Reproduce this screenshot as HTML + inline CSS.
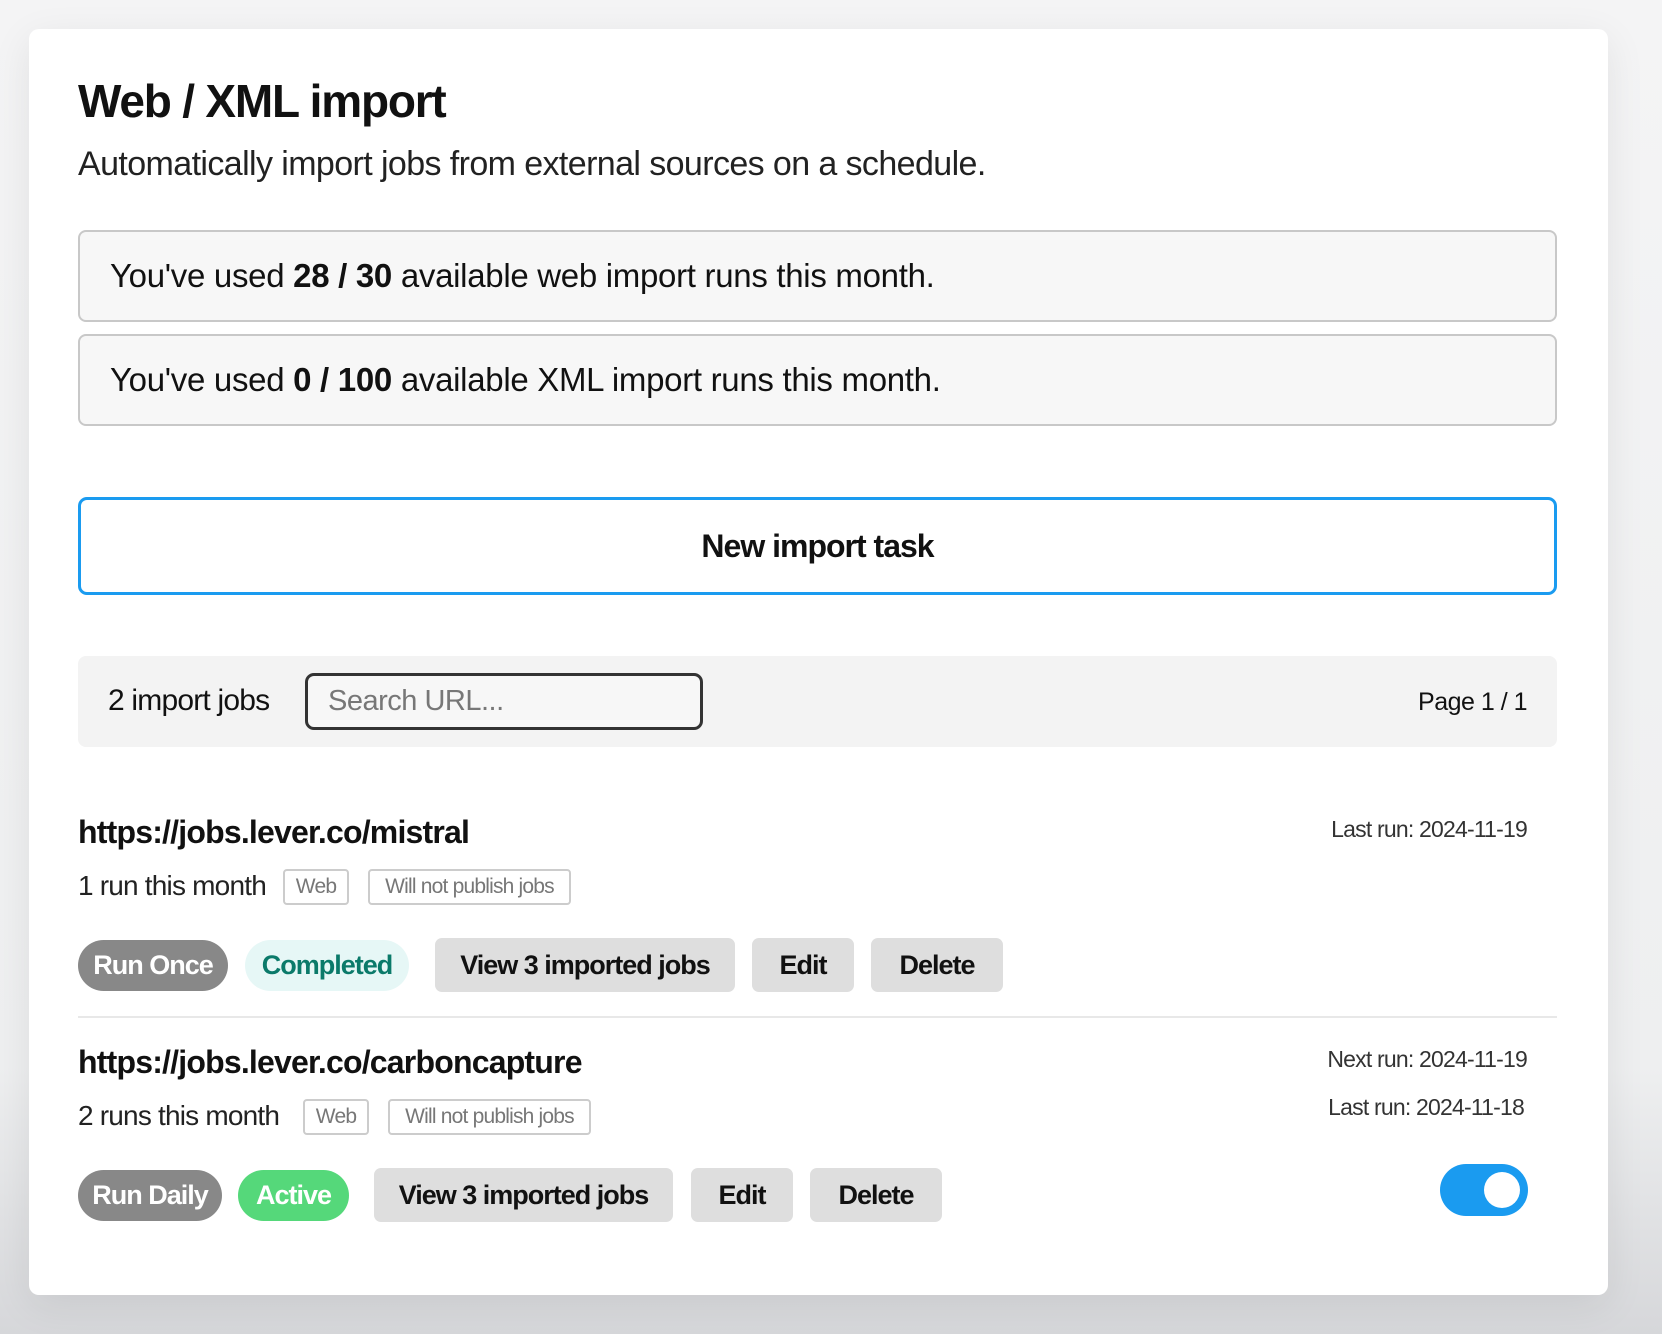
<!DOCTYPE html>
<html><head><meta charset="utf-8"><style>
*{box-sizing:border-box;margin:0;padding:0}
body{width:1662px;height:1334px;background:linear-gradient(#f4f4f5 0%,#eeeff0 80%,#d6d7da 100%);font-family:"Liberation Sans",sans-serif;color:#111;position:relative;overflow:hidden;letter-spacing:-0.5px}
.card{position:absolute;left:29px;top:29px;width:1579px;height:1266px;background:#fff;border-radius:10px;box-shadow:0 10px 40px rgba(0,0,0,.08)}
.a{position:absolute;white-space:nowrap}
h1{position:absolute;left:78px;top:74px;font-size:46px;font-weight:bold;letter-spacing:-1.2px}
.sub{left:78px;top:145px;font-size:34px;color:#222;letter-spacing:-0.6px}
.box{position:absolute;left:78px;width:1479px;border:2px solid #c8c8c8;border-radius:8px;background:#f7f7f7;font-size:33px;padding-left:30px;display:flex;align-items:center;letter-spacing:-0.3px}
.btn{position:absolute;left:78px;top:497px;width:1479px;height:98px;border:3px solid #1a9bf0;border-radius:9px;display:flex;align-items:center;justify-content:center;font-size:32px;font-weight:bold;letter-spacing:-1px}
.bar{position:absolute;left:78px;top:656px;width:1479px;height:91px;background:#f3f3f3;border-radius:8px}
.search{position:absolute;left:305px;top:673px;width:398px;height:57px;border:3px solid #333;border-radius:9px;background:#f7f7f7;font-size:29px;color:#777;padding-left:20px;display:flex;align-items:center}
.url{font-size:32px;font-weight:bold;left:78px;letter-spacing:-0.8px}
.meta{font-size:23px;color:#333;right:135px;letter-spacing:-0.8px}
.runs{font-size:28px;left:78px;color:#222;letter-spacing:-0.8px}
.tag{position:absolute;height:36px;border:2px solid #ccc;border-radius:4px;font-size:21px;color:#777;display:flex;align-items:center;justify-content:center;letter-spacing:-0.8px}
.b{position:absolute;height:54px;font-size:27px;font-weight:bold;display:flex;align-items:center;justify-content:center;border-radius:7px;background:#dedede;color:#111;letter-spacing:-1px}
.pill{border-radius:27px;height:51px}
</style></head><body>
<div class="card"></div>
<h1>Web / XML import</h1>
<div class="a sub">Automatically import jobs from external sources on a schedule.</div>
<div class="box" style="top:230px;height:92px">You've used&nbsp;<b>28 / 30</b>&nbsp;available web import runs this month.</div>
<div class="box" style="top:334px;height:92px">You've used&nbsp;<b>0 / 100</b>&nbsp;available XML import runs this month.</div>
<div class="btn">New import task</div>
<div class="bar"></div>
<div class="a" style="left:108px;top:684px;font-size:30px;letter-spacing:-0.8px">2 import jobs</div>
<div class="search">Search URL...</div>
<div class="a" style="right:135px;top:688px;font-size:25px">Page 1 / 1</div>

<div class="a url" style="top:814px">https://jobs.lever.co/mistral</div>
<div class="a meta" style="top:816px">Last run: 2024-11-19</div>
<div class="a runs" style="top:870px">1 run this month</div>
<div class="tag" style="left:283px;top:869px;width:66px">Web</div>
<div class="tag" style="left:368px;top:869px;width:203px">Will not publish jobs</div>
<div class="b pill" style="left:78px;top:940px;width:150px;background:#888;color:#fff">Run Once</div>
<div class="b pill" style="left:245px;top:940px;width:164px;background:#e6f7f6;color:#0b7a6a">Completed</div>
<div class="b" style="left:435px;top:938px;width:300px">View 3 imported jobs</div>
<div class="b" style="left:752px;top:938px;width:102px">Edit</div>
<div class="b" style="left:871px;top:938px;width:132px">Delete</div>
<div class="a" style="left:78px;top:1016px;width:1479px;height:2px;background:#e8e8e8"></div>

<div class="a url" style="top:1044px">https://jobs.lever.co/carboncapture</div>
<div class="a meta" style="top:1046px">Next run: 2024-11-19</div>
<div class="a meta" style="top:1094px;right:138px">Last run: 2024-11-18</div>
<div class="a runs" style="top:1100px">2 runs this month</div>
<div class="tag" style="left:303px;top:1099px;width:66px">Web</div>
<div class="tag" style="left:388px;top:1099px;width:203px">Will not publish jobs</div>
<div class="b pill" style="left:78px;top:1170px;width:144px;background:#888;color:#fff">Run Daily</div>
<div class="b pill" style="left:238px;top:1170px;width:111px;background:#55d87a;color:#fff">Active</div>
<div class="b" style="left:374px;top:1168px;width:299px">View 3 imported jobs</div>
<div class="b" style="left:691px;top:1168px;width:102px">Edit</div>
<div class="b" style="left:810px;top:1168px;width:132px">Delete</div>
<div class="a" style="left:1440px;top:1164px;width:88px;height:52px;border-radius:26px;background:#1a9bf0"><div style="position:absolute;right:8px;top:8px;width:36px;height:36px;border-radius:50%;background:#fff"></div></div>
</body></html>
